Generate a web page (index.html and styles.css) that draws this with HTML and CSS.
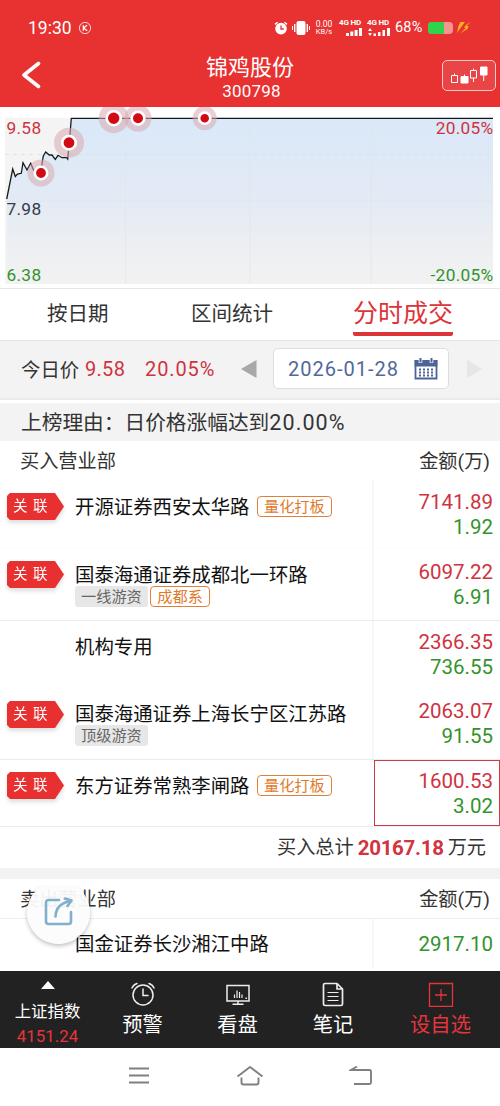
FILE: index.html
```
<!DOCTYPE html>
<html lang="zh-CN">
<head>
<meta charset="utf-8">
<title>锦鸡股份 300798</title>
<link rel="stylesheet" href="styles.css">
</head>
<body>
<div class="screen">
  <header class="header">
    <div class="status">
      <span class="clock">19:30</span>
      <svg class="kmark" width="14" height="14" viewBox="0 0 14 14" fill="none" stroke="#fff"><circle cx="7" cy="7" r="5.6" stroke-width=".8"/><path d="M5.3 4.2v5.6M9 4.2L5.6 7 9.2 9.8" stroke-width="1.3"/></svg>
      <span class="spring"></span>
      <svg class="st-alarm" width="14" height="14" viewBox="0 0 14 14"><circle cx="7" cy="7.6" r="5.8" fill="#fff"/><path d="M1 3.4L3.6 1.2M13 3.4L10.4 1.2" stroke="#fff" stroke-width="1.5"/><path d="M7 4.4v3.6h2.8" fill="none" stroke="#e83131" stroke-width="1.3"/></svg>
      <svg class="st-vib" width="18" height="14" viewBox="0 0 18 14" fill="#fff"><rect x="4.5" y="0" width="9" height="14" rx="2"/><rect x="2" y="3" width="1.4" height="8"/><rect x="14.6" y="3" width="1.4" height="8"/><rect x="0" y="5" width="1" height="4"/><rect x="17" y="5" width="1" height="4"/></svg>
      <div class="speed"><span>0.00</span><span>KB/s</span></div>
      <div class="signal"><span>4G HD</span><svg width="24" height="8" viewBox="0 0 24 8" fill="#fff"><path d="M7 5h3v3H7zM11.300 3.500h3V8h-3zM15.600 2h3v6h-3zM20 0h3v8h-3z"/></svg></div>
      <div class="signal"><span>4G HD</span><svg width="24" height="8" viewBox="0 0 24 8" fill="#fff"><path d="M1 3l2-3 2 3zM1 5l2 3 2-3zM6.500 5.500h2.500V8H6.500zM11 4h2.500v4H11zM15.500 2H18v6h-2.500zM20 0h3v8h-3z"/></svg></div>
      <span class="percent">68%</span>
      <span class="battery"><span class="charge"></span></span>
      <svg class="bolt" width="15" height="13" viewBox="0 0 15 13"><path d="M3.500 1H8L4.500 5.500 0 12 1.500 5zM14 .5L9 4 7 7h2L3 12.500 10.500 8 11.500 5H9.500z" fill="#ffb21c"/></svg>
    </div>
    <div class="titlebar">
      <svg class="back" width="20" height="28" viewBox="0 0 20 28" fill="none" stroke="#fff" stroke-width="3.600" stroke-linecap="round" stroke-linejoin="round"><path d="M17.500 2.500L3 14l14.500 11.500"/></svg>
      <div class="titles"><h1>锦鸡股份</h1><p>300798</p></div>
      <div class="kline"><svg width="38" height="18" viewBox="0 0 38 18" fill="none" stroke="#fff" stroke-width="1"><path d="M1.500 9.500h6v7h-6zM4.500 7.500v2"/><path d="M11 10.500h7v6.500h-7z" fill="#fff"/><path d="M14.500 8.500v2M20.500 4.500h6v7.500h-6zM23.500 2.500v2M23.500 12v4"/><path d="M30.500 1h6.500v8h-6.500z" fill="#fff"/><path d="M33.700 9v6"/></svg></div>
    </div>
  </header>

  <svg class="chart" width="500" height="181" viewBox="0 107 500 181">
    <defs><linearGradient id="sky" x1="0" y1="0" x2="0" y2="1"><stop offset="0" stop-color="#dae8f8"/><stop offset=".45" stop-color="#e2eaf5"/><stop offset=".72" stop-color="#ebeef2"/><stop offset="1" stop-color="#f2f2f2"/></linearGradient></defs>
    <rect x="5" y="118" width="488" height="166" fill="#f4f4f4"/>
    <path d="M6.700 199L12.700 169l2.600 7.500 2.200-2.500 3.800-.7L23 162.700l4 7.300 3.700-6.700 2.800 6.700 7 3 2.800-17 2.400-4 3.600 3h2.700l3.300 4.300 2.700-4 4 2.400h4.700l1 1.300 1.600-16.300 2-24.400H493V284H6.700z" fill="url(#sky)"/>
    <path d="M5 201.300h488M125.500 118v166M250 118v166M371 118v166" stroke="#dfe4ea" stroke-width=".6" fill="none"/>
    <path d="M5 154.500h488" stroke="#d6dee7" stroke-width=".7" stroke-dasharray="4 4"/>
    <path d="M6.700 199L12.700 169l2.600 7.500 2.200-2.500 3.800-.7L23 162.700l4 7.300 3.700-6.700 2.800 6.700 7 3 2.800-17 2.400-4 3.600 3h2.700l3.300 4.300 2.700-4 4 2.400h4.700l1 1.300 1.600-16.300 2-24.400H493" fill="none" stroke="#15191e" stroke-width="1.300"/>
    <g fill="#d9a9b1" fill-opacity=".55"><circle cx="41" cy="173" r="13.500"/><circle cx="69" cy="142.700" r="15"/><circle cx="113.700" cy="118.200" r="15"/><circle cx="138" cy="118.200" r="13.500"/><circle cx="204.700" cy="118.200" r="12"/></g>
    <g fill="#d20a14" stroke="#fff" stroke-width="2.600"><circle cx="41" cy="173" r="6.200"/><circle cx="69" cy="142.700" r="6.700"/><circle cx="113.700" cy="118.200" r="7"/><circle cx="138" cy="118.200" r="6.300"/><circle cx="204.700" cy="118.200" r="5.600"/></g>
    <g class="axis"><text x="6.500" y="134" class="up">9.58</text><text x="6.500" y="215" class="mid">7.98</text><text x="6.500" y="281" class="down">6.38</text><text x="493.500" y="134" class="up end">20.05%</text><text x="493.500" y="281" class="down end">-20.05%</text></g>
  </svg>

  <nav class="tabs"><span class="tab">按日期</span><span class="tab">区间统计</span><span class="tab active">分时成交</span></nav>

  <section class="today">
    <span class="today-label">今日价</span><span class="price">9.58</span><span class="change">20.05%</span>
    <svg class="prev" width="16" height="18" viewBox="0 0 16 18"><path d="M0 9L15.500 0v18z" fill="#a8a8a8"/></svg>
    <div class="date"><span>2026-01-28</span>
      <svg width="24" height="22" viewBox="0 0 24 22"><path d="M1.500 3h21v17.500h-21z" fill="none" stroke="#4d6499" stroke-width="1.800"/><path d="M.6 2h22.800v6.500H.6z" fill="#4d6499"/><path d="M6.500 0v5M17.500 0v5" stroke="#fff" stroke-width="3.600"/><path d="M6.500 0v4.500M17.500 0v4.500" stroke="#4d6499" stroke-width="2"/><path d="M5 11.500h14M5 14.500h14M5 17.500h14" stroke="#4d6499" stroke-width="1.800" stroke-dasharray="2 2"/></svg>
    </div>
    <svg class="next" width="16" height="18" viewBox="0 0 16 18"><path d="M15.500 9L0 0v18z" fill="#e6e6e6"/></svg>
  </section>

  <div class="reason">上榜理由：日价格涨幅达到<span class="num">20.00%</span></div>

  <div class="thead"><span>买入营业部</span><span>金额(万)</span></div>
  <div class="row r1"><div class="rel"><span class="flag">关 联</span></div><div class="broker"><span class="name">开源证券西安太华路</span><span class="tag hot">量化打板</span></div><div class="amount"><span class="up">7141.89</span><span class="down">1.92</span></div></div>
  <div class="row r2"><div class="rel"><span class="flag">关 联</span></div><div class="broker"><span class="name">国泰海通证券成都北一环路</span><div class="tags"><span class="tag">一线游资</span><span class="tag hot">成都系</span></div></div><div class="amount"><span class="up">6097.22</span><span class="down">6.91</span></div></div>
  <div class="row r3"><div class="rel"></div><div class="broker"><span class="name">机构专用</span></div><div class="amount"><span class="up">2366.35</span><span class="down">736.55</span></div></div>
  <div class="row r4"><div class="rel"><span class="flag">关 联</span></div><div class="broker"><span class="name">国泰海通证券上海长宁区江苏路</span><div class="tags"><span class="tag">顶级游资</span></div></div><div class="amount"><span class="up">2063.07</span><span class="down">91.55</span></div></div>
  <div class="row r5"><div class="rel"><span class="flag">关 联</span></div><div class="broker"><span class="name">东方证券常熟李闸路</span><span class="tag hot">量化打板</span></div><div class="amount selected"><span class="up">1600.53</span><span class="down">3.02</span></div></div>
  <div class="total"><span>买入总计</span><b>20167.18</b><span>万元</span></div>

  <div class="thead sell"><span>卖出营业部</span><span>金额(万)</span>
    <div class="share"><svg width="30" height="32" viewBox="0 0 30 32" fill="none" stroke="#7fb0cc" stroke-width="2.600" stroke-linecap="round" stroke-linejoin="round"><path d="M16 4H5.500Q3 4 3 6.500v19Q3 28 5.500 28h20q2.500 0 2.500-2.500V16"/><path d="M12.500 20.500C13 12 17 7.500 27 5"/><path d="M22 2.500L28.500 4.500 24.500 10"/></svg></div>
  </div>
  <div class="row r6"><div class="rel"></div><div class="broker"><span class="name">国金证券长沙湘江中路</span></div><div class="amount"><span class="down">2917.10</span></div></div>

  <footer class="dock">
    <div class="index"><svg width="14" height="8" viewBox="0 0 14 8"><path d="M7 0l7 8H0z" fill="#fff"/></svg><span>上证指数</span><em>4151.24</em></div>
    <div class="item"><svg width="26" height="26" viewBox="0 0 26 26" fill="none" stroke="#eee" stroke-width="1.500" stroke-linecap="round"><circle cx="13" cy="14" r="10"/><path d="M13 8v6.500h5M2 7Q3.500 3.500 7 2.500M24 7Q22.500 3.500 19 2.500"/></svg><span>预警</span></div>
    <div class="item"><svg width="26" height="26" viewBox="0 0 26 26" fill="none" stroke="#eee" stroke-width="1.500"><path d="M2 4.500h22v15.500H2zM13 20v3M7.500 23.300h11"/><path d="M9.500 13.500v3.500M12 9.500V17M14.500 11v6M17 13.500V17" stroke-width="1.200"/><path d="M20.500 17.200h1.500"/></svg><span>看盘</span></div>
    <div class="item"><svg width="26" height="26" viewBox="0 0 26 26" fill="none" stroke="#eee" stroke-width="1.700" stroke-linejoin="round"><path d="M17 2.500H5Q3.500 2.500 3.500 4v19q0 1.500 1.500 1.500h16q1.500 0 1.500-1.500V8zM17 2.500V8h5.500"/><path d="M7.500 11.500h11M7.500 15.500h11M7.500 19.500h11" stroke-width="1.200"/></svg><span>笔记</span></div>
    <div class="item add"><svg width="26" height="26" viewBox="0 0 26 26" fill="none" stroke="#e6353a" stroke-width="1.300"><path d="M1.500 2.500h23v23h-23zM7 14h12M13 8v12"/></svg><span>设自选</span></div>
  </footer>
  <div class="sysnav">
    <svg width="22" height="20" viewBox="0 0 22 20" stroke="#808080" stroke-width="2.200"><path d="M1 2.500h20M1 9.500h20M1 16.500h20"/></svg>
    <svg width="28" height="22" viewBox="0 0 28 22" fill="none" stroke="#808080" stroke-width="1.900" stroke-linejoin="round"><path d="M1.500 11.500L14 2l12.500 9.500M5.500 12.500v5q0 2 2 2h13q2 0 2-2v-5"/></svg>
    <svg width="24" height="22" viewBox="0 0 24 22" fill="none" stroke="#808080" stroke-width="1.900"><path d="M8 1.500L2 5h18.500Q22 5 22 6.500v11q0 1.500-1.500 1.500H5"/></svg>
  </div>
</div>
</body>
</html>
```
FILE: styles.css
```
* { box-sizing: border-box; }
body { margin: 0; background: #fff; color: #333; font-family: Roboto, "Noto Sans CJK SC", sans-serif; }
svg { display: block; flex: none; }
.screen { width: 500px; height: 1106px; overflow: hidden; display: flex; flex-direction: column; }
.screen > * { flex: none; }
.up { color: #cf3340; fill: #cf3340; }
.down { color: #33932b; fill: #33932b; }
.mid { fill: #333b48; }

.header { height: 107px; background: #e83131; color: #fff; }
.status { height: 50px; padding: 5px 28px 0 28px; display: flex; align-items: center; white-space: nowrap; }
.clock { font-size: 17.500px; width: 44px; }
.kmark { margin-left: 6px; }
.spring { flex: 1; }
.st-vib { margin: 0 5px 0 4px; }
.speed { display: flex; flex-direction: column; align-items: center; width: 18px; font-size: 8.500px; line-height: 8px; margin-right: 6px; }
.speed span:last-child { font-size: 7.500px; }
.signal { width: 24px; margin-right: 4px; font-size: 8px; font-weight: 700; line-height: 8px; }
.signal span { display: block; height: 8px; margin-bottom: 1px; letter-spacing: -.2px; }
.percent { font-size: 14.500px; letter-spacing: .2px; width: 29px; }
.battery { width: 25px; height: 12px; border-radius: 4px; background: #f59592; overflow: hidden; margin: 0 4px 0 4px; }
.charge { display: block; width: 16px; height: 12px; background: #2fd44c; }
.titlebar { height: 57px; display: grid; grid-template-columns: 60px 1fr 60px; }
.back { margin: 11px 0 0 21px; }
.titles { text-align: center; }
.titles h1 { margin: 4px 0 0; font-size: 22px; line-height: 28px; font-weight: 400; }
.titles p { margin: -1px 0 0; padding-left: 3px; font-size: 17px; line-height: 20px; letter-spacing: .2px; }
.kline { width: 54px; height: 31px; margin: 10px 0 0 2px; border: 1px solid #fbc8c8; border-radius: 5px; background: #ea4546; padding: 5px 0 0 7px; }

.axis { font-size: 17.300px; letter-spacing: .3px; }
.end { text-anchor: end; }

.tabs { height: 53px; border-top: 1px solid #e6e6e6; border-bottom: 1px solid #e4e4e4; display: flex; padding-left: 47px; line-height: 51px; font-size: 20.500px; }
.tab { width: 144px; }
.tab:nth-child(2) { width: 162px; }
.tab.active { width: 100px; height: 47px; font-size: 25px; color: #dc3438; border-bottom: 4px solid #dc3438; border-radius: 2px; line-height: 50px; white-space: nowrap; }

.today { height: 59px; background: #f3f3f3; border-bottom: 2px solid #eaeaea; display: flex; align-items: center; padding: 0 0 2px 21px; white-space: nowrap; font-size: 19.400px; }
.today-label { width: 64px; }
.price { width: 60px; font-size: 20px; color: #cf3340; letter-spacing: .3px; }
.change { width: 96px; font-size: 20px; color: #cf3340; letter-spacing: .9px; }
.date { width: 176px; height: 41px; margin: 0 18px 0 16px; border: 1px solid #dedede; border-radius: 5px; background: #fff; display: flex; align-items: center; justify-content: space-between; padding: 0 10px 0 14px; color: #52689b; font-size: 20px; letter-spacing: 1px; }

.reason { height: 38px; margin-top: 3px; background: #f3f3f3; padding-left: 21px; font-size: 20.700px; line-height: 40px; white-space: nowrap; }
.num { font-size: 21.500px; letter-spacing: 1.1px; }
.thead { height: 39px; padding: 0 10px 0 20px; display: flex; justify-content: space-between; font-size: 19.200px; line-height: 41px; }

.row { display: grid; grid-template-columns: 75px 297px 128px; border-bottom: 1px solid #ebebeb; }
.r1 { height: 68px; border-bottom-color: #fbfbfb; }
.r2 { height: 73px; }
.r3 { height: 69px; border-bottom-color: #fff; }
.r4 { height: 70px; }
.r5 { height: 67px; }
.r6 { height: 53px; padding-bottom: 2px; border-bottom: 0; border-top: 1px solid #eee; }
.rel { padding: 13px 0 0 7px; }
.flag { display: block; width: 57px; height: 27px; padding-left: 6px; background: #e93030; clip-path: polygon(3px 0, 48px 0, 100% 50%, 48px 100%, 3px 100%, 0 24px, 0 3px); color: #fff; font-size: 14.500px; line-height: 28px; word-spacing: 2px; white-space: nowrap; }
.rel:has(.flag) { filter: drop-shadow(0 3px 2px rgba(0, 0, 0, .13)); }
.broker { padding-top: 14px; color: #111; white-space: nowrap; }
.name { font-size: 19.400px; line-height: 28px; height: 28px; display: inline-block; vertical-align: top; }
.tags { display: flex; gap: 2px; margin-top: -4px; }
.tag { display: inline-block; height: 21px; padding: 0 6px; border-radius: 3px; background: #e7e7e7; color: #666; font-size: 15.200px; line-height: 22px; }
.tag.hot { border: 1.500px solid #df8038; border-radius: 4px; background: #fff; color: #df7a2c; padding: 0 6.500px; line-height: 20px; }
.name + .hot { margin: 2px 0 0 7px; vertical-align: top; }
.amount { border-left: 2px solid #f7f7f7; display: flex; flex-direction: column; padding: 10px 7px 0 0; text-align: right; font-size: 20.500px; line-height: 25px; }
.r2 .amount { padding-top: 12px; }
.r3 .broker { padding-top: 13px; }
.r3 .amount, .r4 .amount { padding-top: 9px; }
.r4 .rel { padding-top: 11px; }
.r4 .broker { padding-top: 11px; }
.r5 .rel { padding-top: 12px; }
.r5 .broker { padding-top: 13px; }
.r5 .amount { border: 1px solid #d23a42; margin-left: 2px; padding-right: 6px; padding-top: 8px; }
.r6 .broker { padding-top: 12px; }
.r6 .amount { padding-top: 13px; }

.total { height: 41px; padding-right: 14px; display: flex; justify-content: flex-end; align-items: center; gap: 4px; font-size: 19.200px; }
.total span { line-height: 28px; margin-top: 1px; }
.total b { font-size: 20.500px; color: #d23440; letter-spacing: -.3px; }
.sell { position: relative; height: 50px; border-top: 11px solid #f2f2f2; }
.share { position: absolute; left: 27px; top: 2px; width: 63px; height: 63px; border-radius: 50%; background: rgba(252, 252, 252, .95); box-shadow: 0 2px 4px rgba(0, 0, 0, .25); padding: 15px 0 0 16px; z-index: 2; clip-path: inset(4px -6px -8px -6px); }

.dock { height: 77px; background: #222; color: #fff; display: grid; grid-template-columns: 95px 95px 95px 96px 119px; }
.index { display: flex; flex-direction: column; align-items: center; padding-top: 10px; font-size: 16.400px; line-height: 24px; }
.index span { margin-top: 11px; height: 24px; }
.index em { font-style: normal; font-size: 16.800px; color: #e6353a; line-height: 24px; letter-spacing: .1px; }
.item { display: flex; flex-direction: column; align-items: center; padding-top: 10px; font-size: 20.300px; line-height: 30px; }
.item span { margin-top: 3px; }
.add { color: #e6353a; }
.sysnav { height: 58px; display: flex; justify-content: space-between; align-items: center; padding: 0 127px 2px 128px; }
```
